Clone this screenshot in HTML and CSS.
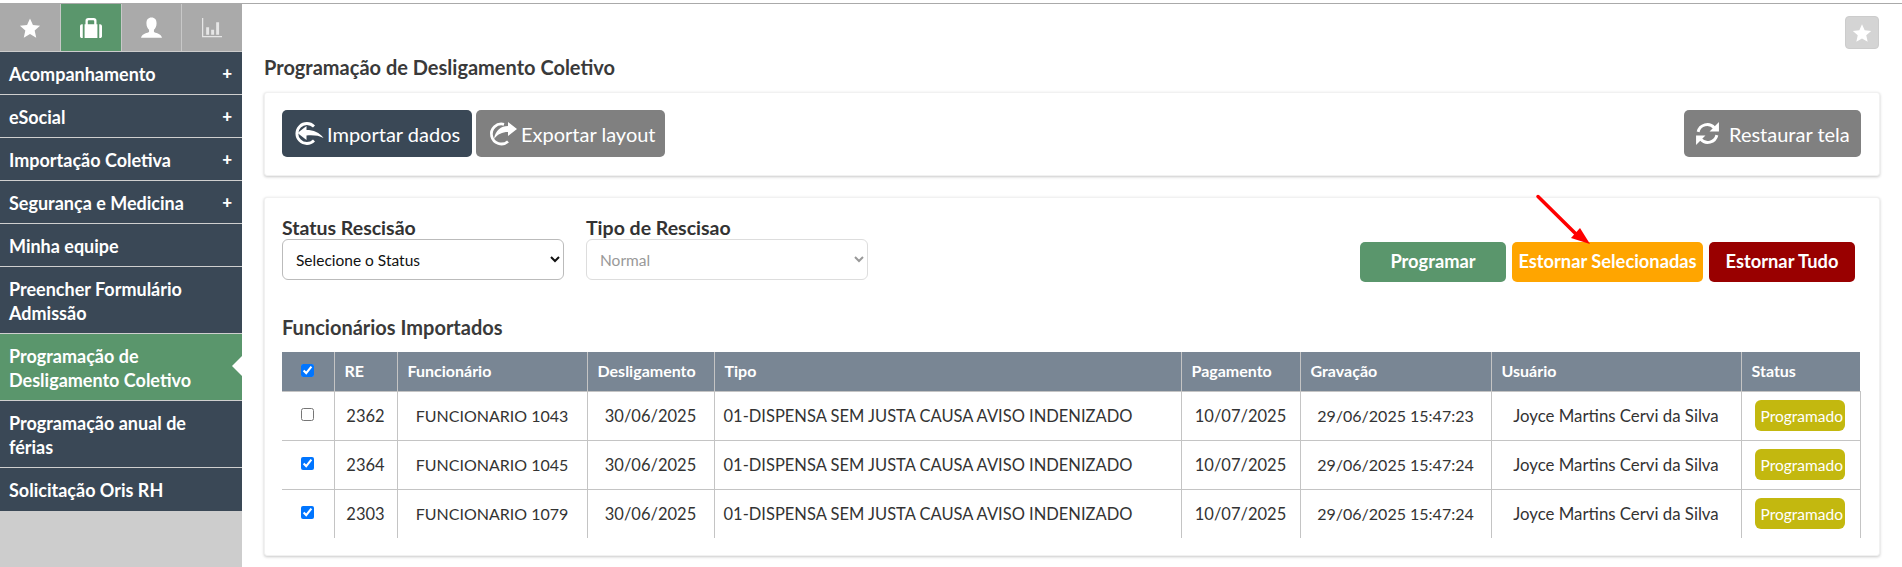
FILE: index.html
```html
<!DOCTYPE html>
<html lang="pt-BR">
<head>
<meta charset="utf-8">
<title>Programação de Desligamento Coletivo</title>
<link rel="stylesheet" href="styles.css">
</head>
<body>
<div class="app">
  <aside class="sidebar">
    <div class="tabs">
      <div class="tab"><svg class="ic-star" viewBox="0 0 24 24"><path d="M12 1.500l3.200 7.200 7.800.8-5.900 5.200 1.700 7.800L12 18.500l-6.800 4 1.700-7.800L1 9.500l7.800-.8z"/></svg></div>
      <div class="tab active"><svg class="ic-case" viewBox="0 0 24 24"><path d="M0 10c0-1 1-2 2-2h1v15H2c-1 0-2-1-2-2zM24 10c0-1-1-2-2-2h-1v15h1c1 0 2-1 2-2zM5 8h1V4c0-2 1-3 3-3h6c2 0 3 1 3 3v4h1v15H5zM8.500 8h7V4.500c0-.6-.4-1-1-1h-5c-.6 0-1 .4-1 1z"/></svg></div>
      <div class="tab"><svg class="ic-user" viewBox="0 0 24 24"><path d="M12 0c3.800 0 5.800 2.500 5.800 6.500 0 3.500-1.500 6-3 7.500v2.500c1 1 8 1.500 9.200 6.500H0c1.200-5 8.200-5.500 9.200-6.500V14c-1.500-1.500-3-4-3-7.500C6.200 2.500 8.200 0 12 0z"/></svg></div>
      <div class="tab"><svg class="ic-chart" viewBox="0 0 24 24"><path d="M0 0h1.500v21.500H24V23H0zM5 11h3.500v9H5zM11 14h3.500v6H11zM17 5h3.500v15H17z"/></svg></div>
    </div>
    <nav class="menu">
      <a class="item"><span>Acompanhamento</span><b class="plus">+</b></a>
      <a class="item"><span>eSocial</span><b class="plus">+</b></a>
      <a class="item"><span>Importação Coletiva</span><b class="plus">+</b></a>
      <a class="item"><span>Segurança e Medicina</span><b class="plus">+</b></a>
      <a class="item"><span>Minha equipe</span></a>
      <a class="item"><span>Preencher Formulário<br>Admissão</span></a>
      <a class="item current"><span>Programação de<br>Desligamento Coletivo</span></a>
      <a class="item"><span>Programação anual de<br>férias</span></a>
      <a class="item"><span>Solicitação Oris RH</span></a>
    </nav>
  </aside>
  <main class="content">
    <div class="fav"><svg viewBox="0 0 24 24"><path d="M12 1.500l3.200 7.200 7.800.8-5.900 5.200 1.700 7.800L12 18.500l-6.800 4 1.700-7.800L1 9.500l7.800-.8z"/></svg></div>
    <h1 class="title">Programação de Desligamento Coletivo</h1>
    <section class="card toolbar">
      <div class="tool-left">
        <button class="btn dark"><svg class="ic" viewBox="0 0 30 30"><path class="ring" d="M20 7.500A10 10 0 1 0 20 21.500"/><path d="M3.500 14L12.500 7v4c7 0 13 2.500 17 8-5-2.500-10-3-17-2.500V21z"/></svg><span>Importar dados</span></button>
        <button class="btn gray"><svg class="ic" viewBox="0 0 30 30"><path class="ring" d="M16 5.300A10 10 0 1 0 20 22.500"/><path d="M29 10L20 3v4C13 7 7.500 11 6 20c4-5 8-7 14-7v4z"/></svg><span>Exportar layout</span></button>
      </div>
      <button class="btn gray reset"><svg class="ic" viewBox="0 0 24 24"><path class="ring" d="M3 10.500A9 9 0 0 1 18.500 6.500"/><path d="M23 1v9h-9z"/><path class="ring" d="M21 13.500A9 9 0 0 1 5.500 17.500"/><path d="M1 23v-9h9z"/></svg><span>Restaurar tela</span></button>
    </section>
    <section class="card panel">
      <div class="filters">
        <div class="field">
          <label>Status Rescisão</label>
          <select class="sel"><option>Selecione o Status</option></select>
        </div>
        <div class="field second">
          <label>Tipo de Rescisao</label>
          <select class="sel" disabled><option>Normal</option></select>
        </div>
        <div class="actions">
          <button class="act green">Programar</button>
          <button class="act orange">Estornar Selecionadas</button>
          <button class="act red">Estornar Tudo</button>
          <svg class="arrow" viewBox="0 0 56 50"><path d="M2 1.500L42 41" /><path class="head" d="M54 49L35 43l9-10z"/></svg>
        </div>
      </div>
      <h2 class="sub">Funcionários Importados</h2>
      <table class="grid">
        <colgroup><col class="c1"><col class="c2"><col class="c3"><col class="c4"><col class="c5"><col class="c6"><col class="c7"><col class="c8"><col class="c9"></colgroup>
        <thead>
          <tr><th class="ck"><input type="checkbox" checked></th><th>RE</th><th>Funcionário</th><th>Desligamento</th><th>Tipo</th><th>Pagamento</th><th>Gravação</th><th>Usuário</th><th>Status</th></tr>
        </thead>
        <tbody>
          <tr><td class="ck"><input type="checkbox"></td><td class="mid">2362</td><td class="mid name">FUNCIONARIO 1043</td><td class="mid">30/06/2025</td><td>01-DISPENSA SEM JUSTA CAUSA AVISO INDENIZADO</td><td class="mid">10/07/2025</td><td class="mid stamp">29/06/2025 15:47:23</td><td class="mid user">Joyce Martins Cervi da Silva</td><td class="st"><span class="badge">Programado</span></td></tr>
          <tr><td class="ck"><input type="checkbox" checked></td><td class="mid">2364</td><td class="mid name">FUNCIONARIO 1045</td><td class="mid">30/06/2025</td><td>01-DISPENSA SEM JUSTA CAUSA AVISO INDENIZADO</td><td class="mid">10/07/2025</td><td class="mid stamp">29/06/2025 15:47:24</td><td class="mid user">Joyce Martins Cervi da Silva</td><td class="st"><span class="badge">Programado</span></td></tr>
          <tr><td class="ck"><input type="checkbox" checked></td><td class="mid">2303</td><td class="mid name">FUNCIONARIO 1079</td><td class="mid">30/06/2025</td><td>01-DISPENSA SEM JUSTA CAUSA AVISO INDENIZADO</td><td class="mid">10/07/2025</td><td class="mid stamp">29/06/2025 15:47:24</td><td class="mid user">Joyce Martins Cervi da Silva</td><td class="st"><span class="badge">Programado</span></td></tr>
        </tbody>
      </table>
    </section>
  </main>
</div>
</body>
</html>
```
FILE: styles.css
```css
* { box-sizing: border-box; }
html, body { margin: 0; height: 100%; overflow: hidden; }
body { font-family: "Lato", "Liberation Sans", sans-serif; color: #333; background: #fff; }
.app { display: flex; height: 567px; padding-top: 4px; background: linear-gradient(#aaa, #aaa) 0 3px / 100% 1px no-repeat #fff; }
.sidebar { width: 242px; flex: none; background: #cdcdcd; }
.tabs { display: flex; height: 48px; background: #aaa; border-bottom: 1px solid #ccc; }
.tab { flex: 1; display: flex; align-items: center; justify-content: center; border-right: 1px solid #c8c8c8; }
.tab:last-child { border-right: 0; }
.tab svg { fill: #fff; }
.tab.active { background: #5a966c; }
.ic-star { width: 22px; height: 22px; }
.ic-case { width: 22px; height: 22px; }
.ic-user { width: 21px; height: 22px; }
.ic-chart { width: 20px; height: 20px; }
.tab .ic-chart { fill: #e6e6e6; }
.menu { display: flex; flex-direction: column; }
.item { display: flex; justify-content: space-between; align-items: center; padding: 0 10px 0 9px; background: #3a4856; color: #fff; font-size: 18px; font-weight: 700; line-height: 24px; border-bottom: 1px solid #cfcfcf; position: relative; }
.item:last-child { border-bottom-color: #3a4856; }
.item span { display: block; padding: 10px 0 8px; }
.plus { font-size: 17px; }
.current { background: #5a966c; }
.current::after { content: ""; position: absolute; right: 0; top: 22px; border: 10px solid transparent; border-left: 0; border-right-color: #fff; }
.content { flex: 1; position: relative; padding: 0 22px; min-width: 0; }
.fav { position: absolute; right: 23px; top: 12px; width: 34px; height: 33px; background: #d4d4d4; border: 1px solid #ccc; border-radius: 4px; display: flex; align-items: center; justify-content: center; }
.fav svg { width: 20px; height: 20px; fill: #fff; }
.title { margin: 0; padding-top: 51px; height: 88px; font-size: 20px; font-weight: 700; line-height: 24px; color: #3a3a3a; }
.card { background: #fff; border: 1px solid #f1f1f1; border-radius: 3px; box-shadow: 0 1px 3px rgba(0,0,0,.22); }
.toolbar { height: 84px; display: flex; justify-content: space-between; align-items: flex-start; padding: 17px 18px 0 17px; margin-bottom: 21px; }
.tool-left { display: flex; gap: 4px; }
.btn { height: 47px; border: 0; border-radius: 5px; color: #fff; font: 400 20px "Lato", sans-serif; display: flex; align-items: center; gap: 3px; padding: 0 0 0 12px; }
.dark { background: #3a4856; width: 190px; }
.gray { background: #808080; width: 189px; }
.reset { width: 177px; gap: 9px; padding-left: 11px; }
.ic { width: 30px; height: 30px; fill: #fff; flex: none; }
.ic .ring { fill: none; stroke: #fff; stroke-width: 2.800; }
.reset .ic { width: 25px; height: 25px; }
.panel { height: 359px; padding: 0 18px 0 17px; }
.filters { display: flex; height: 118px; }
.field { width: 282px; padding-top: 18px; }
.field.second { margin-left: 22px; }
.field label { display: block; font-size: 19.500px; font-weight: 700; line-height: 23px; color: #333; }
.sel { display: block; width: 100%; height: 41px; border: 1px solid #bbb; border-radius: 6px; background: #fff; font: 400 15.500px "Lato", sans-serif; color: #111; padding: 0 9px; }
.sel:disabled { border-color: #ddd; color: #999; background: #fff; opacity: 1; }
.actions { margin-left: auto; margin-right: 6px; display: flex; gap: 6px; padding-top: 44px; position: relative; }
.act { height: 40px; border: 0; border-radius: 5px; color: #fff; font: 700 18.300px "Lato", sans-serif; padding: 0 0 2px; }
.green { background: #5a966c; width: 146px; }
.orange { background: #ffa500; width: 191px; }
.red { background: #990000; width: 146px; }
.arrow { position: absolute; left: 176px; top: -3px; width: 56px; height: 50px; overflow: visible; }
.arrow path { stroke: #f00; stroke-width: 3.500; fill: none; stroke-linecap: round; }
.arrow .head { fill: #f00; stroke: none; }
.sub { margin: -1px 0 0; height: 37px; font-size: 20px; font-weight: 700; line-height: 24px; color: #3a3a3a; }
.grid { border-collapse: collapse; table-layout: fixed; width: 1578px; font-size: 16.500px; }
.c1 { width: 52px; } .c2 { width: 63px; } .c3 { width: 190px; } .c4 { width: 127px; } .c5 { width: 467px; } .c6 { width: 119px; } .c7 { width: 191px; } .c8 { width: 250px; } .c9 { width: 119px; }
.grid th { height: 39px; background: #798694; color: #fff; font-size: 16px; font-weight: 700; text-align: left; padding: 0 9px 2px 10px; border-left: 1px solid #c4c4c4; border-bottom: 1px solid #c4c4c4; }
.grid td { height: 49px; padding: 0 9px; border-left: 1px solid #c4c4c4; border-bottom: 1px solid #c4c4c4; color: #333; white-space: nowrap; }
.grid tr:last-child td { border-bottom: 0; }
.grid th:first-child, .grid td:first-child { border-left: 0; }
.grid td:last-child { border-right: 1px solid #c4c4c4; }
.grid .ck { padding: 0 0 6px; text-align: center; }
.ck input { width: 13px; height: 13px; margin: 0; accent-color: #0075ff; vertical-align: middle; }
.mid { text-align: center; }
.grid .name, .grid .stamp { font-size: 16px; }
.grid .user { font-size: 16.800px; }
.grid .st { padding: 0 0 0 13px; }
.badge { display: flex; align-items: center; width: 90px; height: 31px; padding-left: 6px; border-radius: 6px; background: #c3b80f; color: #fff; font-size: 15.500px; font-weight: 400; }
```
